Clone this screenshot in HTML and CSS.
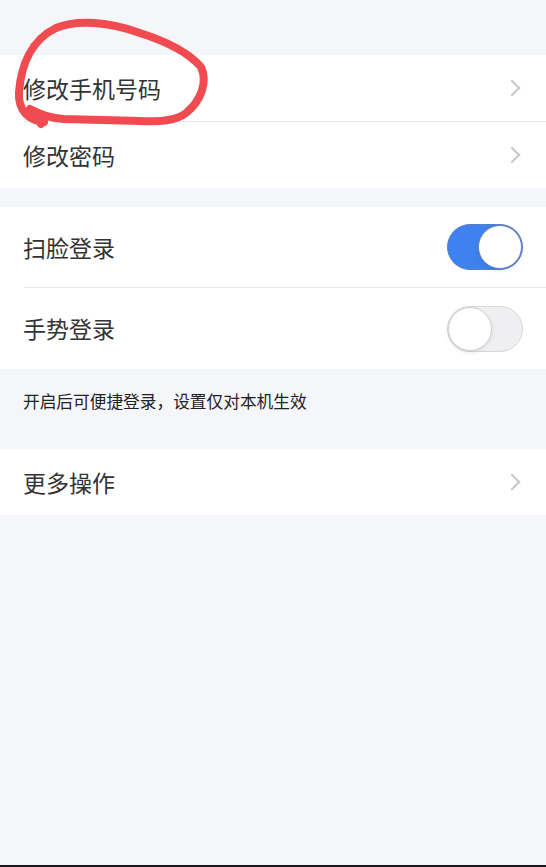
FILE: index.html
```html
<!DOCTYPE html>
<html lang="zh-CN">
<head>
    <meta charset="UTF-8">
    <meta name="viewport" content="width=device-width, initial-scale=1.0">
    <title>账号与安全</title>
    <link rel="stylesheet" href="styles.css">
</head>
<body>
    <div class="page">
        <div class="group first">
            <div class="row">
                <span class="label">修改手机号码</span>
                <span class="chevron"></span>
            </div>
            <div class="row">
                <span class="label">修改密码</span>
                <span class="chevron"></span>
            </div>
        </div>

        <div class="group tall">
            <div class="row">
                <span class="label">扫脸登录</span>
                <span class="switch on"><span class="knob"></span></span>
            </div>
            <div class="row">
                <span class="label">手势登录</span>
                <span class="switch"><span class="knob"></span></span>
            </div>
        </div>
        <p class="note">开启后可便捷登录，设置仅对本机生效</p>

        <div class="group">
            <div class="row">
                <span class="label">更多操作</span>
                <span class="chevron"></span>
            </div>
        </div>

        <svg class="scribble" width="220" height="140" viewBox="0 0 220 140">
            <path d="M44 122 C28 120 18 110 19 92 C21 66 31 40 56 28 C77 19 110 22 140 33 C165 41 189 53 201 67 C208 82 201 101 186 113 C176 121 160 122 140 121 L64 119 C47 118 37 113 30 109 M31 113 C37 116 44 119 41 124"
                  fill="none" stroke="#ef4b50" stroke-width="8" stroke-linecap="round" stroke-linejoin="round"/>
        </svg>
    </div>
</body>
</html>
```

FILE: styles.css
```css
html, body {
    margin: 0;
    padding: 0;
}
body {
    background: #f5f6fa;
    font-family: "Noto Sans CJK SC", "Noto Sans", sans-serif;
    color: #333;
}
.page {
    position: relative;
    box-sizing: border-box;
    height: 100vh;
    padding-top: 55px;
    border-bottom: 2px solid #16161b;
    overflow: hidden;
}
.group {
    background: #fff;
    margin-bottom: 19px;
}
.row {
    height: 66px;
    display: flex;
    align-items: center;
    justify-content: space-between;
    padding: 0 24px 0 24px;
    position: relative;
}
.row + .row {
    border-top: 1px solid #e8e8ea;
    margin-left: 24px;
    padding-left: 0;
}
.tall {
    margin-bottom: 0;
}
.tall .row {
    height: 80px;
}
.tall .row + .row {
    height: 81px;
}
.label {
    font-size: 23px;
    line-height: 1;
    color: #333;
    margin-left: -1px;
}
.chevron {
    width: 10px;
    height: 10px;
    border-top: 2px solid #c8c8cc;
    border-right: 2px solid #c8c8cc;
    transform: rotate(45deg);
    margin-right: 4px;
}
.switch {
    width: 74px;
    height: 44px;
    border-radius: 24px;
    border: 1px solid #d7d7da;
    background: #efeff2;
    display: flex;
    align-items: center;
    justify-content: flex-start;
    margin-right: -1px;
}
.switch .knob {
    width: 44px;
    height: 44px;
    box-sizing: border-box;
    border-radius: 50%;
    background: #fff;
    border: 1px solid #cfcfd3;
    box-shadow: 0 2px 4px rgba(0, 0, 0, 0.08);
}
.switch.on {
    background: #3e82ef;
    border-color: #5b7fc0;
    justify-content: flex-end;
}
.switch.on .knob {
    border-color: #6a86b8;
}
.note {
    margin: 0;
    height: 80px;
    box-sizing: border-box;
    padding: 21px 23px 0;
    font-size: 16.7px;
    line-height: 22px;
    color: #222;
}
.scribble {
    position: absolute;
    left: 0;
    top: 0;
}
```
